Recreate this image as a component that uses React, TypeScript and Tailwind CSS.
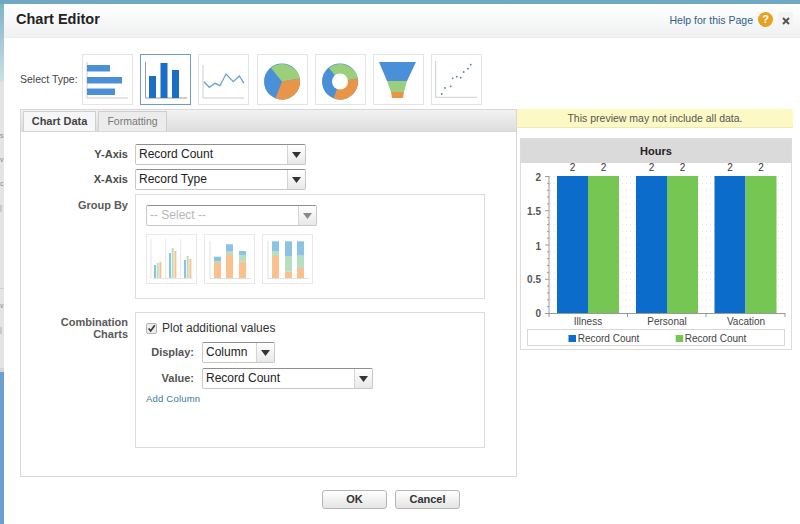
import React from "react";

const font = { fontFamily: '"Liberation Sans", Arial, sans-serif' };

function TypeBox({ selected, children }: { selected?: boolean; children: React.ReactNode }) {
  return (
    <div className={selected ? "w-[51px] h-[51px] border border-[#6f9cc4] bg-white shrink-0" : "w-[51px] h-[51px] border border-[#e4e4e4] bg-white shrink-0"}>
      <svg width="49" height="49" viewBox="0 0 49 49">{children}</svg>
    </div>
  );
}

function Select({ w, label, disabled }: { w: string; label: string; disabled?: boolean }) {
  return (
    <div className={`${w} h-[21px] flex border border-[#c8c8c8] border-t-[#8f8f8f] rounded-[2px] bg-white`}>
      <div className={disabled ? "flex-1 pl-[3px] text-[12px] leading-[18px] text-[#b8b8b8]" : "flex-1 pl-[3px] text-[12px] leading-[19px] text-[#222]"}>{label}</div>
      <div className="w-[18px] border-l border-[#d4d4d4] bg-gradient-to-b from-[#ffffff] to-[#e8e8e8] flex items-center justify-center">
        <svg width="9" height="6" viewBox="0 0 9 6"><path d="M0 0H9L4.5 6Z" fill={disabled ? "#8a8a8a" : "#333"} /></svg>
      </div>
    </div>
  );
}

function Mini({ children }: { children: React.ReactNode }) {
  return (
    <div className="w-[51px] h-[50px] border border-[#e8e8e8] bg-white">
      <svg width="49" height="48" viewBox="0 0 49 48">{children}</svg>
    </div>
  );
}

const Bar = ({ x, w, y, h, c }: { x: number; w: number; y: number; h: number; c: string }) => <rect x={x} y={y} width={w} height={h} fill={c} />;

const blue = "#8cc2e4";
const green = "#b5dfc0";
const orange = "#fac08e";

function Stack({ x, tops }: { x: number; tops: [number, number, number] }) {
  return (
    <g>
      <Bar x={x} w={7} y={tops[0]} h={tops[1] - tops[0]} c={blue} />
      <Bar x={x} w={7} y={tops[1]} h={tops[2] - tops[1]} c={green} />
      <Bar x={x} w={7} y={tops[2]} h={43 - tops[2]} c={orange} />
    </g>
  );
}

function Triple({ x, tops }: { x: number; tops: [number, number, number] }) {
  return (
    <g>
      <Bar x={x} w={2} y={tops[0]} h={43 - tops[0]} c={blue} />
      <Bar x={x + 2.7} w={2} y={tops[1]} h={43 - tops[1]} c={green} />
      <Bar x={x + 5.4} w={2} y={tops[2]} h={43 - tops[2]} c={orange} />
    </g>
  );
}

function Pie({ hole }: { hole?: boolean }) {
  return (
    <g>
      <circle cx="24" cy="26.5" r="18" fill="#4a90d9" />
      <path d="M24 26.5L13 13A18 18 0 0 1 41.8 23.5Z" fill="#9ccf7c" />
      <path d="M24 26.5L41.8 23.5A18 18 0 0 1 17.5 43.3Z" fill="#e8954a" />
      {hole ? <circle cx="24" cy="26.5" r="8" fill="#fff" /> : null}
    </g>
  );
}

export default function App() {
  return (
    <div className="w-[800px] h-[524px] overflow-hidden bg-[#6fa8c0] relative flex" style={font}>
      <div className="w-[4px] mt-[4px] flex flex-col shrink-0 overflow-hidden text-[7px] leading-[12px] text-[#888]">
        <div className="h-[78px] bg-gradient-to-b from-[#7db4c8] to-[#cfe0e4]" />
        <div className="h-[286px] bg-[#e4e4e4] pt-[48px] flex flex-col gap-[12px]">
          <div>s</div>
          <div>v</div>
          <div>c</div>
          <div>|</div>
          <div className="mt-[62px] h-[1px] bg-[#cfcfcf]" />
          <div className="-mt-[1px]">v</div>
          <div>|</div>
        </div>
        <div className="h-[4px] bg-[#d4d4d4]" />
        <div className="flex-1 bg-[#6b9fd0]" />
      </div>
      <div className="flex-1 mt-[4px] bg-white rounded-tl-[4px] flex flex-col">
        {/* header */}
        <div className="h-[34px] shrink-0 flex items-center pl-[12px] pr-[7px] bg-gradient-to-b from-[#ffffff] to-[#f0f1f2] border-b border-[#eceded]">
          <div className="font-bold text-[14.5px] text-[#222] -mt-[2px]">Chart Editor</div>
          <div className="ml-auto text-[10.5px] text-[#30608a]">Help for this Page</div>
          <div className="ml-[5px] -mt-[3px] w-[15px] h-[15px] rounded-full bg-[#e8a020] text-white font-bold text-[11px] leading-[15px] text-center">?</div>
          <div className="ml-[5px] w-[15px] h-[18px] bg-[#f4f4f4] flex items-center justify-center">
            <svg width="8" height="8" viewBox="0 0 8 8"><path d="M1 1L7 7M7 1L1 7" stroke="#555" strokeWidth="2" /></svg>
          </div>
        </div>
        {/* type row */}
        <div className="flex items-center mt-[16px] pl-[16px]">
          <div className="w-[62px] text-[10.5px] text-[#444]">Select Type:</div>
          <div className="flex gap-[7.2px]">
            <TypeBox>
              <path d="M4 7V43H45" fill="none" stroke="#ccc" />
              <Bar x={4} y={10} w={23} h={6.5} c="#4d8fd6" />
              <Bar x={4} y={22} w={35} h={6.5} c="#4d8fd6" />
              <Bar x={4} y={33.5} w={28} h={6.5} c="#4d8fd6" />
            </TypeBox>
            <TypeBox selected>
              <path d="M4.5 7V43H46" fill="none" stroke="#999" />
              <Bar x={8} y={21} w={7} h={22} c="#1a6fc4" />
              <Bar x={19.5} y={8} w={7} h={35} c="#1a6fc4" />
              <Bar x={31} y={15} w={7} h={28} c="#1a6fc4" />
            </TypeBox>
            <TypeBox>
              <path d="M4 10V43H45" fill="none" stroke="#ccc" />
              <path d="M5 26.7L10.3 32.3L16 28.3L21 30.7L27 19L34.3 26.7L40.3 21L45 28.3" fill="none" stroke="#6a9fd8" strokeWidth="1.3" />
            </TypeBox>
            <TypeBox><Pie /></TypeBox>
            <TypeBox><Pie hole /></TypeBox>
            <TypeBox>
              <path d="M5 7H42L33 26H13Z" fill="#4a90d9" />
              <path d="M13 26H33L30 37H17Z" fill="#9ccf7c" />
              <path d="M17 37H30L29 43H18Z" fill="#e8954a" />
            </TypeBox>
            <TypeBox>
              <path d="M3.7 6V42.3H45" fill="none" stroke="#ccc" />
              {[[9.7, 39], [13, 33], [18.7, 31.3], [20.7, 23.3], [24.7, 21.7], [28.7, 22.7], [31.7, 17], [36, 13.7], [38.7, 9.7]].map(([x, y], i) => (
                <circle key={i} cx={x} cy={y} r="0.9" fill="#4f7da8" />
              ))}
            </TypeBox>
          </div>
        </div>
        {/* main */}
        <div className="flex mt-[4px]">
          <div className="ml-[16px] w-[497px] shrink-0">
            <div className="h-[22px] flex items-end pl-[2px] gap-[2px] bg-gradient-to-b from-[#f2f2f2] to-[#dedede] border-t border-l border-r border-[#d8d8d8]">
              <div className="w-[73px] h-[20px] bg-[#f7f7f7] border border-b-0 border-[#cfcfcf] font-bold text-[11px] text-[#444] text-center leading-[19px]">Chart Data</div>
              <div className="w-[69px] h-[20px] bg-[#ececec] border border-b-0 border-[#cfcfcf] text-[10.5px] text-[#777] text-center leading-[19px]">Formatting</div>
            </div>
            <div className="h-[346px] border border-[#d8d8d8] pt-[12px] bg-white">
              <div className="flex flex-col gap-[4px]">
                <div className="flex items-center">
                  <div className="w-[107px] text-right font-bold text-[11px] text-[#4a4a4a]">Y-Axis</div>
                  <div className="ml-[7px]"><Select w="w-[171px]" label="Record Count" /></div>
                </div>
                <div className="flex items-center">
                  <div className="w-[107px] text-right font-bold text-[11px] text-[#4a4a4a]">X-Axis</div>
                  <div className="ml-[7px]"><Select w="w-[171px]" label="Record Type" /></div>
                </div>
              </div>
              <div className="flex mt-[4px]">
                <div className="w-[107px] text-right font-bold text-[11px] text-[#5a5a5a] pt-[3px]">Group By</div>
                <div className="ml-[7px] w-[350px] h-[105px] border border-[#dcdcdc] pt-[10px] pl-[10px]">
                  <Select w="w-[171px]" label="-- Select --" disabled />
                  <div className="flex gap-[7px] mt-[8px]">
                    <Mini>
                      <path d="M4 4V43.5H46M18.7 4V43.5M33.7 4V43.5" fill="none" stroke="#e6e6e6" />
                      <Triple x={7} tops={[30, 28, 27]} />
                      <Triple x={22} tops={[18, 13, 16]} />
                      <Triple x={37} tops={[25, 21, 24]} />
                    </Mini>
                    <Mini>
                      <path d="M5 6V43.5H46" fill="none" stroke="#e0e0e0" />
                      <Stack x={9} tops={[21.7, 26, 28]} />
                      <Stack x={21} tops={[9.3, 16.7, 20]} />
                      <Stack x={34} tops={[16, 20, 26.7]} />
                    </Mini>
                    <Mini>
                      <path d="M5 6V43.5H46" fill="none" stroke="#e0e0e0" />
                      <Stack x={9} tops={[6.3, 16, 21]} />
                      <Stack x={22} tops={[6.3, 21.7, 36.7]} />
                      <Stack x={34} tops={[6.3, 20.7, 33]} />
                    </Mini>
                  </div>
                </div>
              </div>
              <div className="flex mt-[13px]">
                <div className="w-[107px] text-right font-bold text-[11px] leading-[12px] text-[#5a5a5a] pt-[4px]">Combination<br />Charts</div>
                <div className="ml-[7px] w-[350px] h-[136px] border border-[#dcdcdc] pl-[10px] pt-[6px]">
                  <div className="flex items-center gap-[5px]">
                    <div className="w-[11px] h-[11px] border border-[#b5b5b5] rounded-[2px] bg-[#ededed] flex items-center justify-center">
                      <svg width="11" height="11" viewBox="0 0 11 11"><path d="M2 5.5L4.5 8.5L9.5 1.5" fill="none" stroke="#333" strokeWidth="2" /></svg>
                    </div>
                    <div className="text-[12px] text-[#333]">Plot additional values</div>
                  </div>
                  <div className="flex items-center mt-[5px]">
                    <div className="w-[48px] text-right font-bold text-[11px] text-[#555]">Display:</div>
                    <div className="ml-[8px]"><Select w="w-[73px]" label="Column" /></div>
                  </div>
                  <div className="flex items-center mt-[5px]">
                    <div className="w-[48px] text-right font-bold text-[11px] text-[#555]">Value:</div>
                    <div className="ml-[8px]"><Select w="w-[171px]" label="Record Count" /></div>
                  </div>
                  <div className="text-[9.5px] text-[#3a7aa0] mt-[3px] tracking-[0.2px]">Add Column</div>
                </div>
              </div>
            </div>
          </div>
          {/* preview */}
          <div className="w-[276px] shrink-0">
            <div className="h-[19px] bg-[#fdf9c4] border-b border-[#eee9b0] text-[10.5px] leading-[18px] text-center text-[#555]">This preview may not include all data.</div>
            <div className="ml-[3px] mt-[10px] w-[272px] h-[212px] border border-[#dcdcdc] flex flex-col">
              <div className="h-[24px] bg-[#dadada] font-bold text-[11px] leading-[24px] text-center text-[#222]">Hours</div>
              <svg width="270" height="186" viewBox="0 0 270 186" className="block">
                <g stroke="#e2e2e2" strokeDasharray="1 3">
                  {Array.from({ length: 20 }).map((_, i) => (
                    <line key={i} x1="29" x2="264" y1={13.5 + i * 6.85} y2={13.5 + i * 6.85} />
                  ))}
                </g>
                {Array.from({ length: 21 }).map((_, i) => (
                  <line key={i} x1={i % 5 === 0 ? 24 : 26} x2="28" y1={13.5 + i * 6.85} y2={13.5 + i * 6.85} stroke="#999" />
                ))}
                <line x1="28" x2="28" y1="13" y2="150" stroke="#999" />
                <line x1="28" x2="264" y1="150.5" y2="150.5" stroke="#999" />
                {[28, 106.5, 185, 264].map((x) => <line key={x} x1={x} x2={x} y1="150" y2="154" stroke="#999" />)}
                {[36, 115, 193.5].map((x) => (
                  <g key={x}>
                    <rect x={x} y="13" width="31" height="137" fill="#0b6ccb" />
                    <rect x={x + 31} y="13" width="31" height="137" fill="#75c653" />
                    <text x={x + 15.5} y="8" textAnchor="middle" fontSize="10" fill="#333">2</text>
                    <text x={x + 46.5} y="8" textAnchor="middle" fontSize="10" fill="#333">2</text>
                  </g>
                ))}
                {([["2", 17.5], ["1.5", 52], ["1", 86.5], ["0.5", 119.5], ["0", 153.5]] as [string, number][]).map(([t, y]) => (
                  <text key={t} x="20" y={y} textAnchor="end" fontSize="10" fontWeight="bold" fill="#555">{t}</text>
                ))}
                <text x="67" y="162" textAnchor="middle" fontSize="10" fill="#444">Illness</text>
                <text x="146" y="162" textAnchor="middle" fontSize="10" fill="#444">Personal</text>
                <text x="225" y="162" textAnchor="middle" fontSize="10" fill="#444">Vacation</text>
                <rect x="6.5" y="166.5" width="257" height="16" fill="#fff" stroke="#d8d8d8" />
                <rect x="47.5" y="172" width="7.5" height="7" fill="#0b6ccb" />
                <text x="56.7" y="179" fontSize="10" fill="#444">Record Count</text>
                <rect x="154.7" y="172" width="7.5" height="7" fill="#75c653" />
                <text x="163.7" y="179" fontSize="10" fill="#444">Record Count</text>
              </svg>
            </div>
          </div>
        </div>
        {/* buttons */}
        <div className="flex gap-[8px] ml-[318px] mt-[13px]">
          <div className="w-[65px] h-[19px] border border-[#b5b5b5] rounded-[3px] bg-gradient-to-b from-[#ffffff] to-[#e4e4e4] font-bold text-[11px] leading-[17px] text-center text-[#333]">OK</div>
          <div className="w-[65px] h-[19px] border border-[#b5b5b5] rounded-[3px] bg-gradient-to-b from-[#ffffff] to-[#e4e4e4] font-bold text-[11px] leading-[17px] text-center text-[#333]">Cancel</div>
        </div>
      </div>
    </div>
  );
}
